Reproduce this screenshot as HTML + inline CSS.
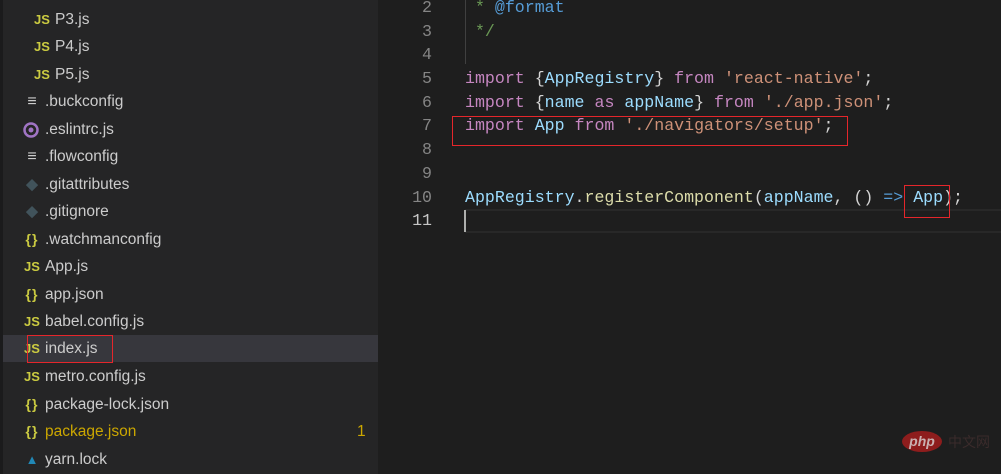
<!DOCTYPE html>
<html><head><meta charset="utf-8"><style>
*{margin:0;padding:0;box-sizing:border-box}
body{width:1001px;height:474px;overflow:hidden;background:#1e1e1e;position:relative;font-family:"Liberation Sans",sans-serif}
#side{position:absolute;left:0;top:0;width:378px;height:474px;background:#252526;border-left:3px solid #1b1b1c;overflow:hidden}
.row{position:absolute;left:0;width:375px;height:27px;line-height:27px;color:#cccccc;font-size:15.5px}
.ic{position:absolute;top:0;font-size:13px;font-weight:bold;text-align:center;width:16px}
.js{color:#cbcb41}
.br{color:#cbcb41;font-size:14px;letter-spacing:1px}
.code{position:absolute;left:465px;font-family:"Liberation Mono",monospace;font-size:16.6px;color:#d4d4d4;white-space:pre;height:24px;line-height:24px}
.ln{position:absolute;left:380px;width:52px;text-align:right;font-family:"Liberation Mono",monospace;font-size:16.6px;color:#858585;height:24px;line-height:24px}
.k{color:#c586c0}.v{color:#9cdcfe}.s{color:#ce9178}.c{color:#6a9955}.f{color:#dcdcaa}.b{color:#569cd6}
.box{position:absolute;border:1px solid #e5262b}
</style></head><body>
<div id="side">
<div class="row" style="top:6px"><span class="ic js" style="left:31px">JS</span><span style="position:absolute;left:52px">P3.js</span></div>
<div class="row" style="top:33px"><span class="ic js" style="left:31px">JS</span><span style="position:absolute;left:52px">P4.js</span></div>
<div class="row" style="top:61px"><span class="ic js" style="left:31px">JS</span><span style="position:absolute;left:52px">P5.js</span></div>
<div class="row" style="top:88px"><span class="ic" style="left:21px;color:#ccc;font-weight:normal;font-size:16px">≡</span><span style="position:absolute;left:42px">.buckconfig</span></div>
<div class="row" style="top:116px"><span class="ic" style="left:20px"><svg width="16" height="16" style="margin-top:6px"><circle cx="8" cy="8" r="6.5" fill="none" stroke="#a074c4" stroke-width="2.5"/><circle cx="8" cy="8" r="2.5" fill="#a074c4"/></svg></span><span style="position:absolute;left:42px">.eslintrc.js</span></div>
<div class="row" style="top:143px"><span class="ic" style="left:21px;color:#ccc;font-weight:normal;font-size:16px">≡</span><span style="position:absolute;left:42px">.flowconfig</span></div>
<div class="row" style="top:171px"><span class="ic" style="left:21px;color:#41535b;font-size:15px">◆</span><span style="position:absolute;left:42px">.gitattributes</span></div>
<div class="row" style="top:198px"><span class="ic" style="left:21px;color:#41535b;font-size:15px">◆</span><span style="position:absolute;left:42px">.gitignore</span></div>
<div class="row" style="top:226px"><span class="ic br" style="left:21px">{}</span><span style="position:absolute;left:42px">.watchmanconfig</span></div>
<div class="row" style="top:253px"><span class="ic js" style="left:21px">JS</span><span style="position:absolute;left:42px">App.js</span></div>
<div class="row" style="top:281px"><span class="ic br" style="left:21px">{}</span><span style="position:absolute;left:42px">app.json</span></div>
<div class="row" style="top:308px"><span class="ic js" style="left:21px">JS</span><span style="position:absolute;left:42px">babel.config.js</span></div>
<div class="row" style="top:335px;background:#37373d"><span class="ic js" style="left:21px">JS</span><span style="position:absolute;left:42px">index.js</span></div>
<div class="row" style="top:363px"><span class="ic js" style="left:21px">JS</span><span style="position:absolute;left:42px">metro.config.js</span></div>
<div class="row" style="top:391px"><span class="ic br" style="left:21px">{}</span><span style="position:absolute;left:42px">package-lock.json</span></div>
<div class="row" style="top:418px;color:#cca700"><span class="ic br" style="left:21px">{}</span><span style="position:absolute;left:42px">package.json</span><span style="position:absolute;left:354px">1</span></div>
<div class="row" style="top:446px"><span class="ic" style="left:21px;color:#2188b6">▲</span><span style="position:absolute;left:42px">yarn.lock</span></div>
</div>
<div class="box" style="left:27px;top:335px;width:86px;height:28px"></div>

<div style="position:absolute;left:465px;top:0;width:1px;height:64px;background:#404040"></div>
<div style="position:absolute;left:465px;top:209px;width:536px;height:24px;border-top:2px solid #282828;border-bottom:2px solid #282828"></div>
<div style="position:absolute;left:464px;top:210px;width:2px;height:22px;background:#aeafad"></div>

<div class="ln" style="top:-4px">2</div><div class="code" style="top:-4px"><span class="c"> * </span><span class="b">@format</span></div>
<div class="ln" style="top:20px">3</div><div class="code c" style="top:20px"> */</div>
<div class="ln" style="top:43px">4</div>
<div class="ln" style="top:67px">5</div><div class="code" style="top:67px"><span class="k">import</span> {<span class="v">AppRegistry</span>} <span class="k">from</span> <span class="s">'react-native'</span>;</div>
<div class="ln" style="top:91px">6</div><div class="code" style="top:91px"><span class="k">import</span> {<span class="v">name</span> <span class="k">as</span> <span class="v">appName</span>} <span class="k">from</span> <span class="s">'./app.json'</span>;</div>
<div class="ln" style="top:114px">7</div><div class="code" style="top:114px"><span class="k">import</span> <span class="v">App</span> <span class="k">from</span> <span class="s">'./navigators/setup'</span>;</div>
<div class="ln" style="top:138px">8</div>
<div class="ln" style="top:162px">9</div>
<div class="ln" style="top:186px">10</div><div class="code" style="top:186px"><span class="v">AppRegistry</span>.<span class="f">registerComponent</span>(<span class="v">appName</span>, () <span class="b">=&gt;</span> <span class="v">App</span>);</div>
<div class="ln" style="top:209px;color:#c6c6c6">11</div>
<div class="box" style="left:452px;top:116px;width:396px;height:30px"></div>
<div class="box" style="left:904px;top:185px;width:46px;height:33px"></div>

<div style="position:absolute;left:902px;top:431px;width:40px;height:21px;border-radius:50%;background:#8e1d1d;color:#c9b0b0;font-size:14px;font-style:italic;font-weight:bold;text-align:center;line-height:20px">php</div>
<div style="position:absolute;left:948px;top:432px;color:#3a2b2b;font-size:14px;font-family:'Noto Sans CJK SC',sans-serif">中文网</div>
</body></html>
